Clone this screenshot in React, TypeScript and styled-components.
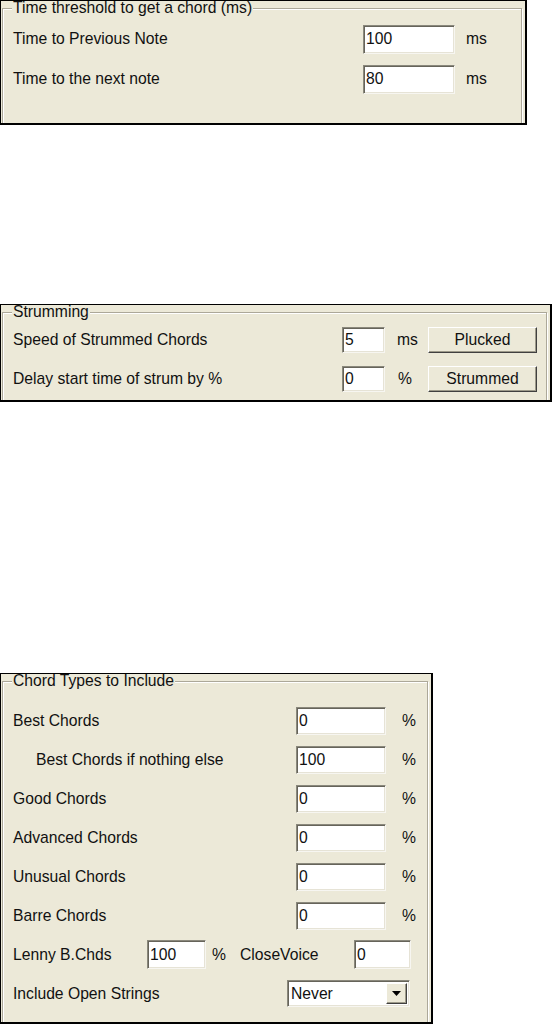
import React from 'react'
import styled, { createGlobalStyle } from 'styled-components'

const GlobalStyle = createGlobalStyle`
  html, body {
    margin: 0;
    padding: 0;
    background: #fff;
  }
  body {
    font-family: 'Liberation Sans', Arial, sans-serif;
    font-size: 15.7px;
    color: #111;
  }
  * {
    box-sizing: border-box;
  }
`

const Page = styled.div`
  display: flex;
  flex-direction: column;
  align-items: flex-start;
  width: 553px;
`

const Panel = styled.div<{ $w: number; $h: number; $top: number }>`
  display: flex;
  width: ${p => p.$w}px;
  height: ${p => p.$h}px;
  margin-top: ${p => p.$top}px;
  background: #ece9d8;
  border-style: solid;
  border-color: #000;
  border-width: 1px 2px 2px 1px;
  overflow: hidden;
`

const Group = styled.fieldset<{ $pad: number }>`
  flex: 1;
  min-width: 0;
  height: calc(100% + 30px);
  margin: 0 3px 0 1px;
  padding: ${p => p.$pad}px 0 0 10px;
  border: 1px solid #aca899;
  box-shadow: inset 1px 1px 0 #fff, 1px 1px 0 #fff;
`

const Legend = styled.legend`
  margin-left: -1px;
  padding: 0 1px;
  line-height: 14px;
  background: #ece9d8;
`

const Row = styled.div<{ $cols: string; $h: number }>`
  display: grid;
  grid-template-columns: ${p => p.$cols};
  align-items: center;
  height: ${p => p.$h}px;
`

const Label = styled.span<{ $indent?: number }>`
  padding-left: ${p => p.$indent || 0}px;
  white-space: nowrap;
`

const Unit = styled.span<{ $pad: number }>`
  padding-left: ${p => p.$pad}px;
  white-space: nowrap;
`

const Field = styled.input<{ $h: number }>`
  width: 100%;
  height: ${p => p.$h}px;
  margin: 0;
  padding: 0 2px;
  font: inherit;
  color: #111;
  background: #fff;
  border-style: solid;
  border-width: 1px;
  border-color: #8a887c #f7f6f1 #f7f6f1 #8a887c;
  box-shadow: inset 1px 1px 0 #66645a, inset -1px -1px 0 #e6e3d6;
  outline: none;
`

const Button = styled.button<{ $h: number }>`
  width: 100%;
  height: ${p => p.$h}px;
  margin: 0;
  padding: 0;
  font: inherit;
  color: #111;
  background: #ece9d8;
  border-style: solid;
  border-width: 1px;
  border-color: #fff #404040 #404040 #fff;
  box-shadow: inset -1px -1px 0 #9d9a8a;
`

const Select = styled.div`
  display: flex;
  align-items: stretch;
  height: 27px;
  padding: 2px;
  background: #fff;
  border-style: solid;
  border-width: 1px;
  border-color: #8a887c #f7f6f1 #f7f6f1 #8a887c;
  box-shadow: inset 1px 1px 0 #66645a, inset -1px -1px 0 #e6e3d6;
`

const SelectText = styled.span`
  flex: 1;
  display: flex;
  align-items: center;
  padding-left: 1px;
`

const DropButton = styled.span`
  display: flex;
  align-items: center;
  justify-content: center;
  width: 21px;
  background: #ece9d8;
  border-style: solid;
  border-width: 1px;
  border-color: #fff #404040 #404040 #fff;
  box-shadow: inset -1px -1px 0 #9d9a8a;
`

const Arrow = () => (
  <svg width="9" height="5" viewBox="0 0 9 5">
    <path d="M0 0h9L4.5 5z" fill="#000" />
  </svg>
)

const chordRows = [
  { label: 'Best Chords', value: '0' },
  { label: 'Best Chords if nothing else', value: '100', indent: 23 },
  { label: 'Good Chords', value: '0' },
  { label: 'Advanced Chords', value: '0' },
  { label: 'Unusual Chords', value: '0' },
  { label: 'Barre Chords', value: '0' }
]

export default function App() {
  return (
    <Page>
      <GlobalStyle />

      <Panel $w={527} $h={125} $top={0}>
        <Group $pad={4}>
          <Legend>Time threshold to get a chord (ms)</Legend>
          <Row $cols="350px 92px auto" $h={40}>
            <Label>Time to Previous Note</Label>
            <Field $h={29} readOnly value="100" />
            <Unit $pad={11}>ms</Unit>
          </Row>
          <Row $cols="350px 92px auto" $h={40}>
            <Label>Time to the next note</Label>
            <Field $h={29} readOnly value="80" />
            <Unit $pad={11}>ms</Unit>
          </Row>
        </Group>
      </Panel>

      <Panel $w={552} $h={98} $top={179}>
        <Group $pad={1}>
          <Legend>Strumming</Legend>
          <Row $cols="329px 43px 43px 109px" $h={39}>
            <Label>Speed of Strummed Chords</Label>
            <Field $h={26} readOnly value="5" />
            <Unit $pad={12}>ms</Unit>
            <Button $h={26}>Plucked</Button>
          </Row>
          <Row $cols="329px 43px 43px 109px" $h={39}>
            <Label>Delay start time of strum by %</Label>
            <Field $h={26} readOnly value="0" />
            <Unit $pad={13}>%</Unit>
            <Button $h={26}>Strummed</Button>
          </Row>
        </Group>
      </Panel>

      <Panel $w={433} $h={351} $top={271}>
        <Group $pad={13}>
          <Legend>Chord Types to Include</Legend>
          {chordRows.map(r => (
            <Row key={r.label} $cols="283px 90px auto" $h={39}>
              <Label $indent={r.indent}>{r.label}</Label>
              <Field $h={28} readOnly value={r.value} />
              <Unit $pad={16}>%</Unit>
            </Row>
          ))}
          <Row $cols="134px 59px 34px 114px 57px" $h={39}>
            <Label>Lenny B.Chds</Label>
            <Field $h={29} readOnly value="100" />
            <Unit $pad={6}>%</Unit>
            <Label>CloseVoice</Label>
            <Field $h={29} readOnly value="0" />
          </Row>
          <Row $cols="274px 123px" $h={39}>
            <Label>Include Open Strings</Label>
            <Select>
              <SelectText>Never</SelectText>
              <DropButton>
                <Arrow />
              </DropButton>
            </Select>
          </Row>
        </Group>
      </Panel>
    </Page>
  )
}
